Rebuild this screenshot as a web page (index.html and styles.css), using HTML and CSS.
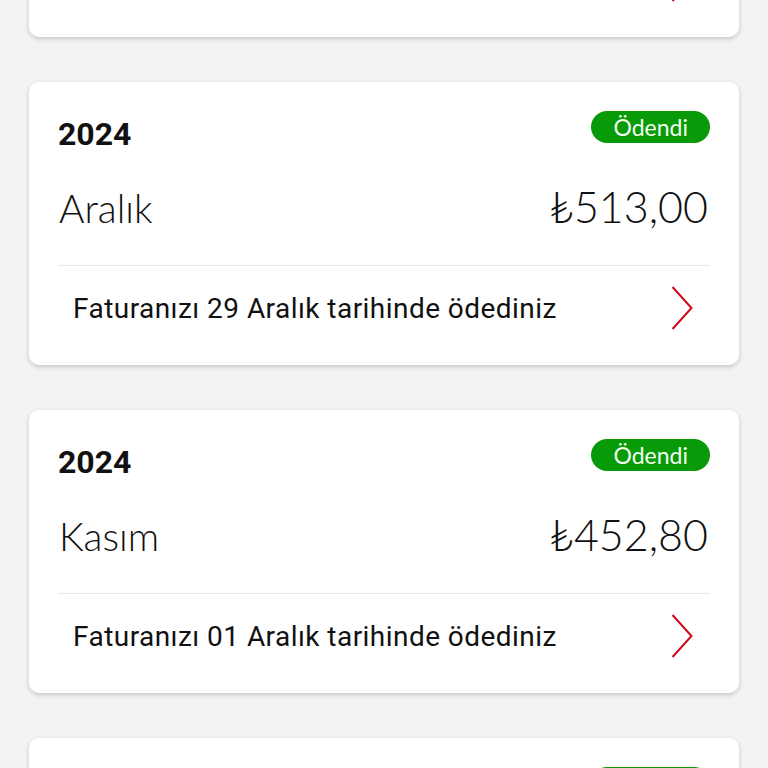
FILE: index.html
```html
<!DOCTYPE html>
<html lang="tr">
  <head>
    <meta charset="UTF-8" />
    <meta name="viewport" content="width=device-width, initial-scale=1.0" />
    <title>Faturalarım</title>
    <link rel="stylesheet" href="styles.css">
  </head>
  <body>
    <div class="bill-list">
      <div class="bill-card">
        <div class="bill-head">
          <span class="bill-year">2025</span>
          <span class="badge">Ödendi</span>
        </div>
        <div class="bill-amount">
          <span class="bill-month">Ocak</span>
          <span class="bill-price">₺498,50</span>
        </div>
        <div class="bill-foot">
          <span class="bill-note">Faturanızı 30 Ocak tarihinde ödediniz</span>
          <svg class="chevron" width="22" height="44" viewBox="0 0 22 44"><polyline points="1.5,1 20.5,22 1.5,43" fill="none" stroke="#d0091c" stroke-width="2" /></svg>
        </div>
      </div>
      <div class="bill-card">
        <div class="bill-head">
          <span class="bill-year">2024</span>
          <span class="badge">Ödendi</span>
        </div>
        <div class="bill-amount">
          <span class="bill-month">Aralık</span>
          <span class="bill-price">₺513,00</span>
        </div>
        <div class="bill-foot">
          <span class="bill-note">Faturanızı 29 Aralık tarihinde ödediniz</span>
          <svg class="chevron" width="22" height="44" viewBox="0 0 22 44"><polyline points="1.5,1 20.5,22 1.5,43" fill="none" stroke="#d0091c" stroke-width="2" /></svg>
        </div>
      </div>
      <div class="bill-card">
        <div class="bill-head">
          <span class="bill-year">2024</span>
          <span class="badge">Ödendi</span>
        </div>
        <div class="bill-amount">
          <span class="bill-month">Kasım</span>
          <span class="bill-price">₺452,80</span>
        </div>
        <div class="bill-foot">
          <span class="bill-note">Faturanızı 01 Aralık tarihinde ödediniz</span>
          <svg class="chevron" width="22" height="44" viewBox="0 0 22 44"><polyline points="1.5,1 20.5,22 1.5,43" fill="none" stroke="#d0091c" stroke-width="2" /></svg>
        </div>
      </div>
      <div class="bill-card">
        <div class="bill-head">
          <span class="bill-year">2024</span>
          <span class="badge">Ödendi</span>
        </div>
        <div class="bill-amount">
          <span class="bill-month">Ekim</span>
          <span class="bill-price">₺447,10</span>
        </div>
        <div class="bill-foot">
          <span class="bill-note">Faturanızı 01 Kasım tarihinde ödediniz</span>
          <svg class="chevron" width="22" height="44" viewBox="0 0 22 44"><polyline points="1.5,1 20.5,22 1.5,43" fill="none" stroke="#d0091c" stroke-width="2" /></svg>
        </div>
      </div>
    </div>
  </body>
</html>
```

FILE: styles.css
```css
body {
  font-family: Roboto, "Liberation Sans", sans-serif;
  margin: 0;
  padding: 0;
  background: #f3f3f3;
  color: #111;
  overflow: hidden;
}
.bill-list {
  margin-top: -246px;
  padding: 0 29px;
}
.bill-card {
  background: #fff;
  border-radius: 10px;
  box-shadow: 0 2px 5px rgba(0, 0, 0, 0.18);
  padding: 29px 29px 0 29px;
  margin-bottom: 45px;
}
.bill-head {
  display: flex;
  justify-content: space-between;
  align-items: flex-start;
  height: 39px;
}
.bill-year {
  font-size: 32px;
  font-weight: 700;
  line-height: 32px;
  margin-top: 7px;
}
.badge {
  background: #089a08;
  color: #f2fff0;
  font-family: Lato, sans-serif;
  font-size: 23px;
  height: 32px;
  line-height: 32px;
  padding: 0 22px;
  border-radius: 16px;
}
.bill-amount {
  display: flex;
  justify-content: space-between;
  align-items: baseline;
  font-family: Lato, sans-serif;
  font-weight: 300;
  line-height: 40px;
  margin-top: 37px;
  padding-bottom: 37px;
  border-bottom: 1px solid #e6e6e6;
}
.bill-month {
  font-size: 39px;
  margin-left: 1px;
}
.bill-price {
  font-size: 43px;
  margin-right: 2px;
}
.bill-foot {
  display: flex;
  justify-content: space-between;
  align-items: flex-start;
  padding: 20px 17px 35px 15px;
}
.bill-note {
  font-size: 28px;
  line-height: 32px;
  letter-spacing: 0.45px;
  margin-top: 7px;
}
.chevron {
  display: block;
}
```
